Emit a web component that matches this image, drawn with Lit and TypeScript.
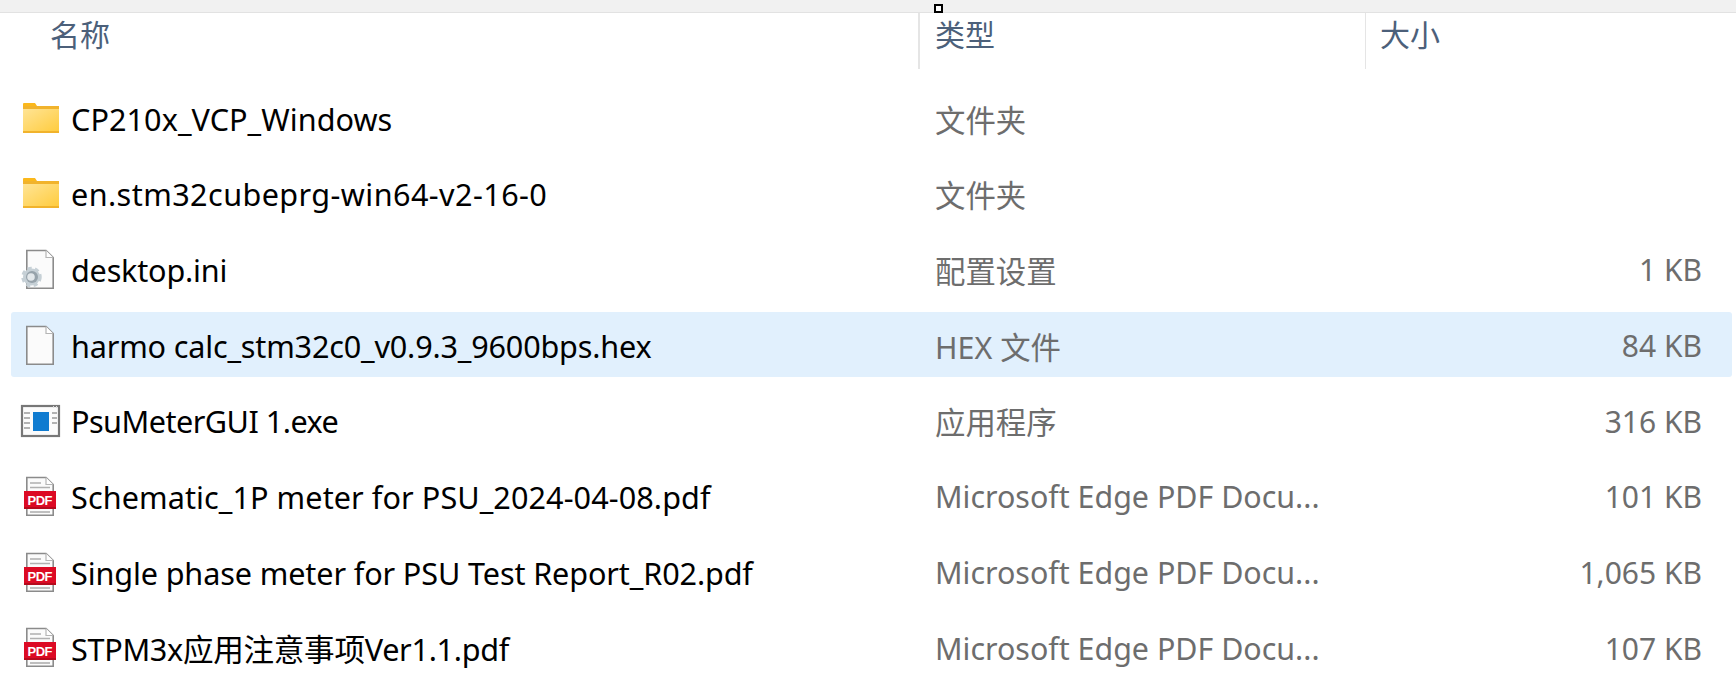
import { LitElement, html, css, svg } from "lit";
import { customElement } from "lit/decorators.js";

type Kind = "folder" | "ini" | "blank" | "exe" | "pdf";

// track: per-name letter spacing, px
const files: { name: string; type: string; size: string; kind: Kind; track: number; selected?: boolean }[] = [
  { name: "CP210x_VCP_Windows", type: "文件夹", size: "", kind: "folder", track: 0.06 },
  { name: "en.stm32cubeprg-win64-v2-16-0", type: "文件夹", size: "", kind: "folder", track: 0.42 },
  { name: "desktop.ini", type: "配置设置", size: "1 KB", kind: "ini", track: -0.2 },
  { name: "harmo calc_stm32c0_v0.9.3_9600bps.hex", type: "HEX 文件", size: "84 KB", kind: "blank", track: -0.18, selected: true },
  { name: "PsuMeterGUI 1.exe", type: "应用程序", size: "316 KB", kind: "exe", track: -0.52 },
  { name: "Schematic_1P meter for PSU_2024-04-08.pdf", type: "Microsoft Edge PDF Docu...", size: "101 KB", kind: "pdf", track: 0.08 },
  { name: "Single phase meter for PSU Test Report_R02.pdf", type: "Microsoft Edge PDF Docu...", size: "1,065 KB", kind: "pdf", track: -0.12 },
  { name: "STPM3x应用注意事项Ver1.1.pdf", type: "Microsoft Edge PDF Docu...", size: "107 KB", kind: "pdf", track: -0.3 },
];

const page = svg`<path d="M.8 1.500H20L27.200 8.500V39.200H.8Z" fill="#fbfbfb" stroke="#8b8b8b" stroke-width="1.6"/>
  <path d="M20 1.500V8.500H27.200" fill="#fff" stroke="#b5b5b5" stroke-width="1.2"/>`;

const icons: Record<Kind, unknown> = {
  folder: svg`<g transform="translate(0 5)">
    <path d="M0 4V1Q0 0 1 0H12L14 3H36V6H0Z" fill="#fbb81c"/>
    <rect y="3" width="36" height="27" fill="#f1b32c"/>
    <rect y="6" width="36" height="22" fill="url(#fold)"/>
    <defs><linearGradient id="fold" x1="0" y1="0" x2="1" y2="1">
      <stop offset="0" stop-color="#ffe495"/><stop offset="1" stop-color="#ffcc3f"/>
    </linearGradient></defs></g>`,
  ini: svg`<g transform="translate(3 0)">${page}</g>
    <circle cx="8.500" cy="28" r="8.500" fill="#c6d0d6" stroke="#c6d0d6" stroke-width="3.500" stroke-dasharray="4 3.200"/>
    <circle cx="9" cy="28" r="6" fill="#97a3ab"/><circle cx="8" cy="28" r="3.800" fill="#e3e8eb"/>`,
  blank: svg`<g transform="translate(3 0)">${page}</g>`,
  exe: svg`<rect x="-1" y="6" width="37" height="30" fill="#fbfbfb" stroke="#777" stroke-width="2.200"/>
    <path d="M30 7H31M33 7H34" stroke="#ddd" stroke-width="2"/>
    <rect x="10" y="12" width="16" height="19" fill="#0f7bd0"/>
    <path d="M1 13H7M1 18H7M1 23H7M1 28H7M29 13H34M29 18H34M29 23H34" stroke="#9a9a9a" stroke-width="1.500"/>`,
  pdf: svg`<g transform="translate(3 0)">${page}
      <path d="M4 7H15M4 11.500H24" stroke="#b0b0b0" stroke-width="1.600"/>
      <path d="M4 36H24" stroke="#b0b0b0" stroke-width="1.600"/></g>
    <rect x="1" y="15" width="32" height="18" fill="#dc0a24"/>
    <rect x="1" y="31" width="32" height="2" fill="#b50a1d"/>
    <text class="pdf" x="17" y="28.500" text-anchor="middle" textLength="25">PDF</text>`,
};

@customElement("app-root")
export class AppRoot extends LitElement {
  static styles = css`
    :host {
      display: block;
      height: 696px;
      background: #fff;
      font-family: "Noto Sans", "Noto Sans CJK SC", sans-serif;
      font-size: 30px;
      overflow: hidden;
    }
    .top {
      position: relative;
      height: 12px;
      background: #f1f1f1;
      border-bottom: 1px solid #e2e2e2;
    }
    .handle {
      position: absolute;
      left: 934px;
      top: 4px;
      width: 5px;
      height: 5px;
      background: #fff;
      border: 2px solid #000;
    }
    .head {
      display: grid;
      grid-template-columns: 918px 447px 1fr;
      height: 56px;
      color: #4c607a;
      line-height: 44px;
    }
    .head div {
      padding-left: 50px;
    }
    .head div + div {
      padding-left: 15px;
      border-left: 2px solid #e5e5e5;
    }
    .head div:last-child {
      padding-left: 14px;
      border-left-width: 1px;
    }
    .rows {
      display: flex;
      flex-direction: column;
      gap: 10.7px;
      padding: 16px 4px 0 11px;
    }
    .row {
      display: grid;
      grid-template-columns: 60px 864px 320px 447px;
      align-items: center;
      height: 65px;
      border-radius: 3px;
      color: #000;
    }
    .row.selected {
      background: #e1f0fd;
    }
    .icon {
      display: block;
      margin-left: 12px;
      overflow: visible;
    }
    .pdf {
      font: bold 13px "Liberation Sans", sans-serif;
      fill: #fff;
    }
    .type,
    .size {
      color: #6d6d6d;
      white-space: nowrap;
      padding-top: 2px;
    }
    .type {
      font-size: 30.4px;
    }
    .size {
      text-align: right;
    }
    .name {
      white-space: nowrap;
      font-size: 30.6px;
      padding-top: 2px;
    }
  `;

  render() {
    return html`
      <div class="top"><div class="handle"></div></div>
      <div class="head"><div>名称</div><div>类型</div><div>大小</div></div>
      <div class="rows">
        ${files.map(
          (f) => html`
            <div class="row ${f.selected ? "selected" : ""}">
              <svg class="icon" width="40" height="40" viewBox="0 0 40 40">${icons[f.kind]}</svg>
              <div class="name" style="letter-spacing: ${f.track}px">${f.name}</div>
              <div class="type">${f.type}</div>
              <div class="size">${f.size}</div>
            </div>
          `
        )}
      </div>
    `;
  }
}
